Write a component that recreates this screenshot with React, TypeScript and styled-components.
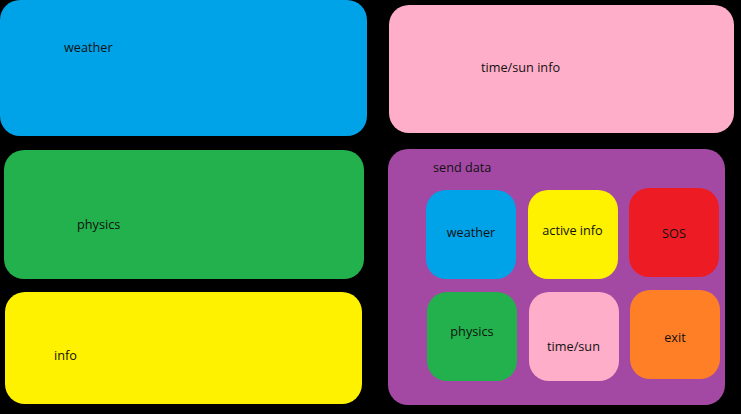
import styled, { createGlobalStyle } from "styled-components";

const GlobalStyle = createGlobalStyle`
  html, body {
    margin: 0;
    padding: 0;
    background: #000;
  }
  body {
    font-family: "Open Sans", "Noto Sans", "DejaVu Sans", sans-serif;
    font-size: 12.7px;
    color: #111;
  }
`;

const palette = {
  blue: "#00a2e8",
  pink: "#ffaec9",
  green: "#22b14c",
  yellow: "#fff200",
  purple: "#a349a4",
  red: "#ed1c24",
  orange: "#ff7f27",
};

const Screen = styled.div`
  width: 741px;
  height: 414px;
  display: flex;
  overflow: hidden;
  background: #000;
`;

const Column = styled.div<{ $w: number; $ml?: number; $gap: number }>`
  width: ${(p) => p.$w}px;
  margin-left: ${(p) => p.$ml ?? 0}px;
  display: flex;
  flex-direction: column;
  gap: ${(p) => p.$gap}px;
`;

const Panel = styled.section<{
  $bg: string;
  $w: number;
  $h: number;
  $ml?: number;
  $mt?: number;
  $px: number;
  $py: number;
}>`
  box-sizing: border-box;
  width: ${(p) => p.$w}px;
  height: ${(p) => p.$h}px;
  margin-left: ${(p) => p.$ml ?? 0}px;
  margin-top: ${(p) => p.$mt ?? 0}px;
  padding: ${(p) => p.$py}px 0 0 ${(p) => p.$px}px;
  background: ${(p) => p.$bg};
  border-radius: 20px;
  line-height: 18px;
`;

const Label = styled.span`
  display: block;
  white-space: nowrap;
`;

const SendPanel = styled(Panel)`
  display: flex;
  flex-direction: column;
`;

const ButtonGrid = styled.div`
  display: grid;
  grid-template-columns: repeat(3, 90px);
  grid-auto-rows: 90px;
  column-gap: 11.5px;
  row-gap: 12px;
  margin: 12px 0 0 -7px;
`;

const SendButton = styled.button<{ $bg: string; $mt?: number; $ml?: number; $pt: number }>`
  box-sizing: border-box;
  width: 90px;
  height: 89px;
  margin-top: ${(p) => p.$mt ?? 0}px;
  margin-left: ${(p) => p.$ml ?? 0}px;
  padding: ${(p) => p.$pt}px 0 0;
  display: flex;
  justify-content: center;
  align-items: flex-start;
  border: none;
  border-radius: 20px;
  background: ${(p) => p.$bg};
  font: inherit;
  line-height: 18px;
  color: #111;
  cursor: pointer;
`;

const buttons = [
  { label: "weather", bg: palette.blue, mt: 2, pt: 33 },
  { label: "active info", bg: palette.yellow, mt: 2, pt: 31 },
  { label: "SOS", bg: palette.red, pt: 36 },
  { label: "physics", bg: palette.green, mt: 2, ml: 1, pt: 30 },
  { label: "time/sun", bg: palette.pink, mt: 2, ml: 1, pt: 45 },
  { label: "exit", bg: palette.orange, ml: 1, pt: 38 },
];

export default function App() {
  return (
    <>
      <GlobalStyle />
      <Screen>
        <Column $w={367} $gap={14}>
          <Panel $bg={palette.blue} $w={367} $h={136} $px={64} $py={38}>
            <Label>weather</Label>
          </Panel>
          <Panel $bg={palette.green} $w={360} $h={129} $ml={4} $px={73} $py={65}>
            <Label>physics</Label>
          </Panel>
          <Panel $bg={palette.yellow} $w={357} $h={112} $ml={5} $mt={-1} $px={49} $py={54}>
            <Label>info</Label>
          </Panel>
        </Column>
        <Column $w={346} $ml={21} $gap={16}>
          <Panel $bg={palette.pink} $w={345} $h={128} $ml={1} $mt={5} $px={92} $py={53}>
            <Label>time/sun info</Label>
          </Panel>
          <SendPanel $bg={palette.purple} $w={337} $h={256} $px={45} $py={9}>
            <Label>send data</Label>
            <ButtonGrid>
              {buttons.map((b) => (
                <SendButton key={b.label} $bg={b.bg} $mt={b.mt} $ml={b.ml} $pt={b.pt}>
                  {b.label}
                </SendButton>
              ))}
            </ButtonGrid>
          </SendPanel>
        </Column>
      </Screen>
    </>
  );
}
